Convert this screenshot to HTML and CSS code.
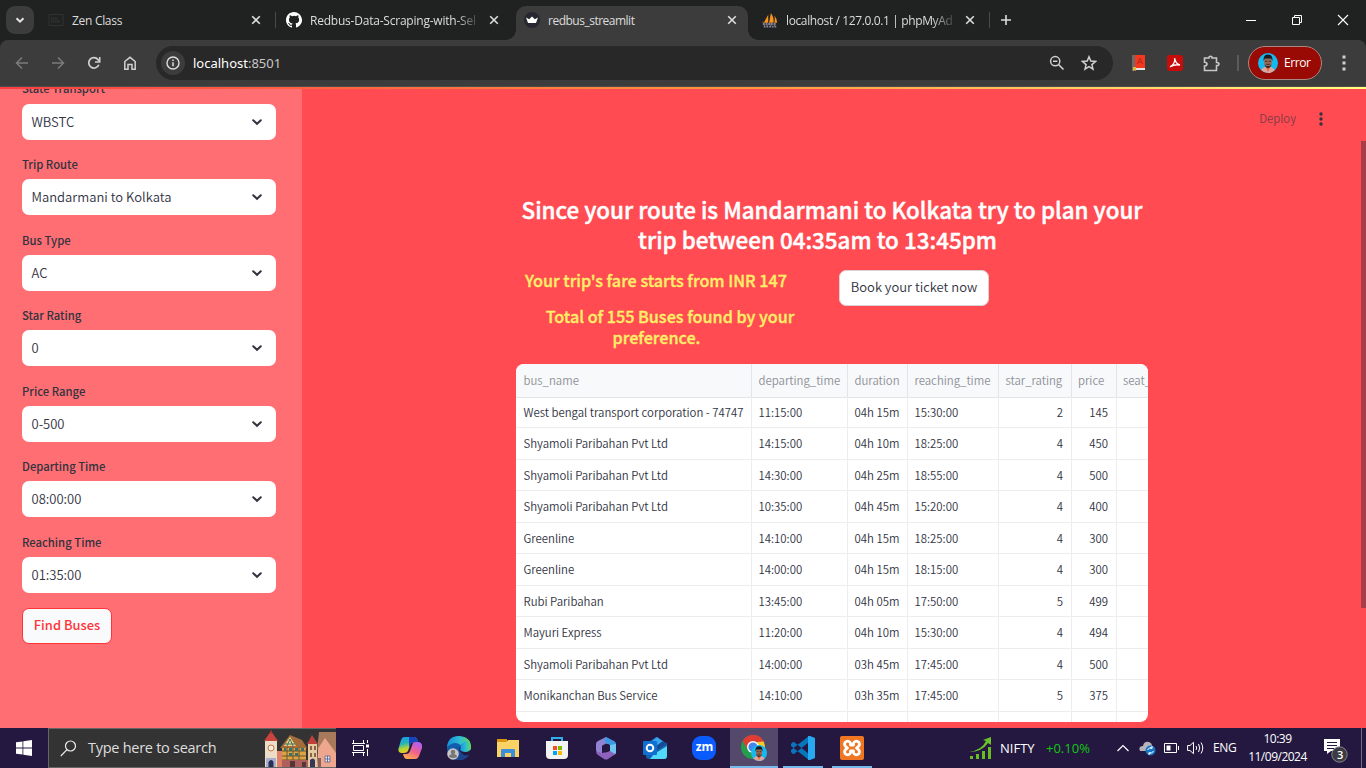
FILE: index.html
```html
<!DOCTYPE html>
<html lang="en">
<head>
<meta charset="utf-8">
<title>redbus_streamlit</title>
<link rel="stylesheet" href="styles.css">
</head>
<body>
<svg class="defs" width="0" height="0">
  <defs>
    <symbol id="close" viewBox="0 0 10 10"><path d="M1.2 1.2l7.6 7.6M8.800 1.200L1.200 8.800" fill="none" stroke="#dcdcdc" stroke-width="1.600"/></symbol>
    <symbol id="chev" viewBox="0 0 12 12"><path d="M2.200 4.200L6 7.800l3.800-3.600" fill="none" stroke="#31333f" stroke-width="2" stroke-linecap="round"/></symbol>
    <symbol id="sail" viewBox="0 0 18 18"><path d="M2 12L7 3v9zM8 12L10 1q4 6 3 11zM14 12q1-4 0-8 3 4 3 8z" fill="#f79420"/><path d="M1 11l2 5M5 12l1 4M10 12v4M15 12l-1 4" stroke="#c77b28" stroke-width="1"/><path d="M1 13.500h15M2 16.500h14" stroke="#7c83ad" stroke-width="2" stroke-dasharray="2 1"/></symbol>
    <symbol id="face" viewBox="0 0 20 20"><circle cx="10" cy="10" r="10" fill="#16b9ee"/><path d="M3 17q2-3.500 7-3.500t7 3.500q-3 3-7 3t-7-3z" fill="#dba6a0"/><path d="M8 14l2 5 2-5z" fill="#e8622d"/><ellipse cx="10" cy="8.800" rx="3.900" ry="5.500" fill="#9a6a56"/><path d="M5.600 8Q5 1.500 10 1.500T14.400 8l-1.200-2.500H6.800z" fill="#191a24"/><path d="M7 8.300h2.300M10.700 8.300H13M8.300 11.300h3.400" stroke="#33221f" stroke-width=".9"/><path d="M6.500 11q.5 4 3.500 4t3.500-4l-1.500 2H8z" fill="#3b2726"/></symbol>
  </defs>
</svg>

<header class="tabstrip">
  <div class="tab-search"><button class="tab-search-btn"><svg width="12" height="12" viewBox="0 0 12 12"><path d="M2.500 4.200L6 7.700l3.500-3.500" fill="none" stroke="#e3e3e3" stroke-width="2"/></svg></button></div>
  <div class="tab"><svg width="16" height="16" viewBox="0 0 16 16"><rect x="1" y="2.500" width="14" height="11" fill="none" stroke="#303131"/><path d="M3 6.500h7M3 9.500h9" stroke="#333" stroke-width="2" stroke-dasharray="1.500 .6"/></svg><span class="tab-title t1">Zen Class</span><svg class="x" width="10" height="10"><use href="#close"/></svg><i></i></div>
  <div class="tab"><svg width="16" height="16" viewBox="0 0 16 16"><path fill="#fff" d="M8 0C3.580 0 0 3.580 0 8c0 3.540 2.290 6.530 5.470 7.590.4.070.55-.17.55-.38v-1.490c-2.010.37-2.530-.49-2.690-.94-.09-.23-.48-.94-.82-1.130-.28-.15-.68-.52-.01-.53.63-.01 1.080.58 1.230.82.72 1.210 1.870.87 2.330.66.070-.52.28-.87.51-1.070-1.780-.2-3.640-.89-3.640-3.950 0-.87.31-1.590.82-2.150-.08-.2-.36-1.020.08-2.120 0 0 .67-.21 2.200.82a7.400 7.400 0 0 1 4 0c1.530-1.040 2.200-.82 2.200-.82.44 1.100.16 1.920.08 2.120.51.56.82 1.270.82 2.150 0 3.070-1.870 3.750-3.650 3.950.29.25.54.73.54 1.480v2.190c0 .21.150.46.550.38A8 8 0 0 0 8 0z"/></svg><span class="tab-title t2">Redbus-Data-Scraping-with-Sel</span><svg class="x" width="10" height="10"><use href="#close"/></svg></div>
  <div class="tab active"><svg width="16" height="16" viewBox="0 0 16 16"><circle cx="8" cy="8" r="8" fill="#262730"/><path d="M2 5.500l3.200 1.800L8 4.500l2.800 2.800L14 5.500l-2 5.500H4z" fill="#fff"/></svg><span class="tab-title t3">redbus_streamlit</span><svg class="x" width="10" height="10"><use href="#close"/></svg></div>
  <div class="tab"><svg width="18" height="18"><use href="#sail"/></svg><span class="tab-title t4">localhost / 127.0.0.1 | phpMyAd</span><svg class="x" width="10" height="10"><use href="#close"/></svg><i></i></div>
  <svg class="plus" width="12" height="12" viewBox="0 0 12 12"><path d="M6 1v10M1 6h10" stroke="#dcdcdc" stroke-width="1.600"/></svg>
  <div class="win">
    <svg width="12" height="12" viewBox="0 0 12 12"><path d="M1 6.500h10" stroke="#fff"/></svg>
    <svg width="12" height="12" viewBox="0 0 12 12"><path d="M1.500 3.500h7v7h-7zM3.500 3V1.500h7v7H9" fill="none" stroke="#fff"/></svg>
    <svg width="12" height="12" viewBox="0 0 12 12"><path d="M1 1l10 10M11 1L1 11" stroke="#fff" stroke-width="1.100"/></svg>
  </div>
</header>

<nav class="toolbar">
  <div class="nav-btns">
    <svg width="14" height="14" viewBox="0 0 14 14"><path d="M13 7H2M7 1.500L1.500 7 7 12.500" fill="none" stroke="#7b7b7b" stroke-width="1.500"/></svg>
    <svg width="14" height="14" viewBox="0 0 14 14"><path d="M1 7h11M7 1.500L12.500 7 7 12.500" fill="none" stroke="#7b7b7b" stroke-width="1.500"/></svg>
    <svg width="14" height="14" viewBox="0 0 14 14"><path d="M11.800 8.700A5.200 5.200 0 1 1 11 3.600L12.300 5" fill="none" stroke="#d0d0d0" stroke-width="1.700"/><path d="M12.700 1v5H8" fill="none" stroke="#d0d0d0" stroke-width="1.600"/></svg>
    <svg width="14" height="14" viewBox="0 0 14 14"><path d="M1.800 5.500L7 1.300l5.200 4.200v7.700H9V8.500H5v4.700H1.800z" fill="none" stroke="#d0d0d0" stroke-width="1.500"/></svg>
  </div>
  <div class="omnibox">
    <span class="info"><svg width="14" height="14" viewBox="0 0 14 14"><circle cx="7" cy="7" r="6" fill="none" stroke="#dedede" stroke-width="1.400"/><path d="M7 6.200v4M7 3.500v1.500" stroke="#dedede" stroke-width="1.500"/></svg></span>
    <span class="url">localhost<b>:8501</b></span>
    <svg class="mag" width="16" height="16" viewBox="0 0 16 16"><circle cx="6.200" cy="6.200" r="4.600" fill="none" stroke="#d0d0d0" stroke-width="1.500"/><path d="M9.500 9.500l5 5M4 6.200h4.400" stroke="#d0d0d0" stroke-width="1.600"/></svg>
    <svg width="16" height="16" viewBox="0 0 16 16"><path d="M8 1.800l1.800 4.300 4.700.4-3.600 3.100 1.100 4.600L8 11.700l-4 2.500 1.100-4.600L1.500 6.500l4.700-.4z" fill="none" stroke="#d0d0d0" stroke-width="1.500"/></svg>
  </div>
  <div class="ext">
    <svg width="14" height="16" viewBox="0 0 14 16"><path d="M0 0h3v16H0z" fill="#6d6a67"/><path d="M3 0h10v13H3z" fill="#f4371f"/><path d="M5.500 9L8 3l2.500 6M6 7h4" stroke="#b32b1c" fill="none"/><path d="M2 13h11v2H2z" fill="#e4e4e4"/><path d="M1 12h3v4l-1.500-1L1 16z" fill="#e4b637"/></svg>
    <svg width="16" height="16" viewBox="0 0 16 16"><rect width="16" height="16" rx="2.500" fill="#c60d0a"/><path d="M3 11.800Q8.500 9 7.600 3.200 8.500 9 13 10q-5-1-10 1.800z" fill="none" stroke="#fff" stroke-width="1.300"/></svg>
    <svg width="17" height="17" viewBox="0 0 17 17"><path d="M1.500 3H6V2q1.500-1.600 3 0v1h4.500v4.500q2.500 0 2.500 1.600T13.500 10.500V15.500h-12V11q2.500-.2 2.500-1.900T1.500 7.200z" fill="none" stroke="#c7c7c7" stroke-width="1.600"/></svg>
    <i></i>
    <div class="profile"><svg width="20" height="20"><use href="#face"/></svg><span>Error</span></div>
    <svg width="4" height="16" viewBox="0 0 4 16"><path d="M0.500 2h3M.5 8h3M.5 14h3" stroke="#d0d0d0" stroke-width="3"/></svg>
  </div>
</nav>

<div class="page">
  <aside class="sidebar">
    <label>State Transport</label><div class="select"><span>WBSTC</span><svg width="12" height="12"><use href="#chev"/></svg></div>
    <label>Trip Route</label><div class="select"><span>Mandarmani to Kolkata</span><svg width="12" height="12"><use href="#chev"/></svg></div>
    <label>Bus Type</label><div class="select"><span>AC</span><svg width="12" height="12"><use href="#chev"/></svg></div>
    <label>Star Rating</label><div class="select"><span>0</span><svg width="12" height="12"><use href="#chev"/></svg></div>
    <label>Price Range</label><div class="select"><span>0-500</span><svg width="12" height="12"><use href="#chev"/></svg></div>
    <label>Departing Time</label><div class="select"><span>08:00:00</span><svg width="12" height="12"><use href="#chev"/></svg></div>
    <label>Reaching Time</label><div class="select"><span>01:35:00</span><svg width="12" height="12"><use href="#chev"/></svg></div>
    <button class="find">Find Buses</button>
  </aside>
  <main class="main">
    <div class="app-bar"><span>Deploy</span><svg width="4" height="14" viewBox="0 0 4 14"><circle cx="2" cy="2" r="1.700"/><circle cx="2" cy="7" r="1.700"/><circle cx="2" cy="12" r="1.700"/></svg></div>
    <div class="content">
      <h2>Since your route is Mandarmani to Kolkata try to plan your<br><span class="anchor">trip between 04:35am to 13:45pm</span></h2>
      <div class="cols">
        <div class="facts"><h4 class="fare">Your trip's fare starts from INR 147</h4><h4 class="total">Total of 155 Buses found by your<br><span class="anchor">preference.</span></h4></div>
        <button class="book">Book your ticket now</button>
      </div>
      <div class="table">
        <div class="row head"><span>bus_name</span><span>departing_time</span><span>duration</span><span>reaching_time</span><span>star_rating</span><span>price</span><span>seat_</span></div>
        <div class="row"><span>West bengal transport corporation - 74747</span><span>11:15:00</span><span>04h 15m</span><span>15:30:00</span><span>2</span><span>145</span><span></span></div>
        <div class="row"><span>Shyamoli Paribahan Pvt Ltd</span><span>14:15:00</span><span>04h 10m</span><span>18:25:00</span><span>4</span><span>450</span><span></span></div>
        <div class="row"><span>Shyamoli Paribahan Pvt Ltd</span><span>14:30:00</span><span>04h 25m</span><span>18:55:00</span><span>4</span><span>500</span><span></span></div>
        <div class="row"><span>Shyamoli Paribahan Pvt Ltd</span><span>10:35:00</span><span>04h 45m</span><span>15:20:00</span><span>4</span><span>400</span><span></span></div>
        <div class="row"><span>Greenline</span><span>14:10:00</span><span>04h 15m</span><span>18:25:00</span><span>4</span><span>300</span><span></span></div>
        <div class="row"><span>Greenline</span><span>14:00:00</span><span>04h 15m</span><span>18:15:00</span><span>4</span><span>300</span><span></span></div>
        <div class="row"><span>Rubi Paribahan</span><span>13:45:00</span><span>04h 05m</span><span>17:50:00</span><span>5</span><span>499</span><span></span></div>
        <div class="row"><span>Mayuri Express</span><span>11:20:00</span><span>04h 10m</span><span>15:30:00</span><span>4</span><span>494</span><span></span></div>
        <div class="row"><span>Shyamoli Paribahan Pvt Ltd</span><span>14:00:00</span><span>03h 45m</span><span>17:45:00</span><span>4</span><span>500</span><span></span></div>
        <div class="row"><span>Monikanchan Bus Service</span><span>14:10:00</span><span>03h 35m</span><span>17:45:00</span><span>5</span><span>375</span><span></span></div>
        <div class="row"><span></span><span></span><span></span><span></span><span></span><span></span><span></span></div>
      </div>
    </div>
  </main>
  <div class="decoration"></div>
  <div class="scrollbar"></div>
</div>

<footer class="taskbar">
  <div class="start"><svg width="16" height="16" viewBox="0 0 16 16"><path d="M0 2.300L6.500 1.400v6.200H0zM7.300 1.300L16 0v7.600H7.300zM0 8.400h6.500v6.200L0 13.700zM7.300 8.400H16V16l-8.700-1.300z" fill="#fff"/></svg></div>
  <div class="search">
    <svg width="17" height="17" viewBox="0 0 17 17"><circle cx="10.500" cy="6" r="5" fill="none" stroke="#eee" stroke-width="1.200"/><path d="M7 9.700L.8 16" stroke="#eee" stroke-width="1.200"/></svg>
    <span>Type here to search</span>
    <svg class="town" width="72" height="38" viewBox="0 0 72 38">
      <path d="M1 12h12v26H1z" fill="#eddcc7"/><path d="M0 12L7 2l7 10z" fill="#c9443c"/><path d="M7 1v4" stroke="#a33"/><circle cx="7" cy="19" r="3" fill="#f5eddd" stroke="#c47743"/><path d="M2 29h10v9H2z" fill="#a9add0"/><path d="M4.500 38v-5q3-4 5 0v5z" fill="#253054"/>
      <path d="M13 22h6v16h-6z" fill="#df8167"/><path d="M18 18h24v20H18z" fill="#dba344"/><path d="M16 19L26 6l12 5 5 8z" fill="#a26d38"/><path d="M20 17l6-9 6 9z" fill="#efd68a"/><path d="M23 17l3-7 3 7M21 15h10" stroke="#3c716b" fill="none"/><path d="M18 22h24M18 27h24M18 31h24M23 18v13M29 18v13M35 18v13" stroke="#6b552d"/><path d="M20 19h2v3h-2zM25 19h3v3h-3zM31 19h3v3h-3zM37 19h3v3h-3zM25 24h3v3h-3zM31 24h3v3h-3z" fill="#3c716b"/><path d="M18 31h26v7H18z" fill="#ae605c"/><path d="M26 32h5v6h-5zM38 33h4v5h-4z" fill="#563538"/>
      <path d="M44 14h9v24h-9z" fill="#e7c9a0"/><path d="M43 15l5-9 6 9z" fill="#bd403b"/><path d="M46 17h2v4h-2zM50 17h2v4h-2zM46 24h2v4h-2zM50 24h2v4h-2z" fill="#886348"/><path d="M46 38v-7q3-3 5 0v7z" fill="#34395c"/>
      <path d="M54 19L61 5h11v33H53z" fill="#eda78e"/><path d="M55 3h17v21L61 9l-8 12z" fill="#a77a5b"/><path d="M61 27h5v6h-5z" fill="#f1f0e6" stroke="#8b6a88"/><path d="M63.500 27v6M61 30h5" stroke="#5673a8"/><path d="M54 29h3v9h-3z" fill="#8c615c"/>
    </svg>
  </div>
  <div class="apps">
    <div class="view"><svg width="18" height="16" viewBox="0 0 18 16"><path d="M1.500 0v3.500h10V0M1.500 5.500h10v5h-10zM1.500 16v-3.500h10V16M15.500 0v3M15.500 9v7" fill="none" stroke="#fff"/><path d="M0 3.500h13M0 12.500h13" stroke="#fff"/><path d="M14 4.500h3v3h-3z" fill="#fff"/></svg></div>
    <div><svg width="24" height="24" viewBox="0 0 24 24"><defs><linearGradient id="c1" x1="0" y1="0" x2=".3" y2="1"><stop offset="0" stop-color="#1797ee"/><stop offset=".45" stop-color="#26b5b5"/><stop offset=".75" stop-color="#b8d530"/><stop offset="1" stop-color="#f0c624"/></linearGradient><linearGradient id="c2" x1=".7" y1="0" x2=".2" y2="1"><stop offset="0" stop-color="#b35df0"/><stop offset=".5" stop-color="#f0628d"/><stop offset="1" stop-color="#ffae47"/></linearGradient></defs><path d="M6 1h10q3 0 4 5h-4q-3 0-4 3l-2 6q-1 2-4 2H3q-4-1-2-6l2-7q1-3 3-3z" fill="url(#c1)"/><path d="M18 23H9q-3 0-4-5h3q3 0 4-3l3-8q0-1 3-1h3q4 1 3 6l-3 8q-1 3-3 3z" fill="url(#c2)"/><path d="M11 1h5q3 0 4 5h-5q-2 0-3 3l-1 4z" fill="#1644bd"/></svg></div>
    <div><svg width="26" height="26" viewBox="0 0 26 26"><defs><linearGradient id="e1" x1="0" x2="1"><stop offset="0" stop-color="#168ddb"/><stop offset=".55" stop-color="#31bed2"/><stop offset="1" stop-color="#67d94e"/></linearGradient></defs><circle cx="13" cy="13" r="12" fill="#115eac"/><path d="M1 12Q2 1 13 1q12 1 12 11 0 5-7 5-4 0-4-2 3-4-1-6-5-3-12 3z" fill="url(#e1)"/><path d="M11 11q-3 10 13 8Q20 25 13 25q-9-4-2-14z" fill="#1c438e"/><path d="M14 11q-2 7 11 4l1 4q-4 2-8 1-7-3-4-9z" fill="#241840"/><path d="M14 10q3 2 0 5 2 2 5 2 5 0 6-4 0-5-5-7z" fill="url(#e1)"/><circle cx="7" cy="19" r="5.800" fill="#c8c8c8"/><circle cx="7" cy="17" r="2.300" fill="#777"/><path d="M3 22q0-3 4-3t4 3q-4 2-8 0z" fill="#777"/></svg></div>
    <div><svg width="22" height="20" viewBox="0 0 22 20"><path d="M0 1h10v4H0z" fill="#dd950f"/><path d="M0 4h9l2-2h11v17H0z" fill="#fbd365"/><path d="M4 19v-7q0-1 1-1h12q1 0 1 1v7h-4v-4H8v4z" fill="#3b8ed7"/></svg></div>
    <div><svg width="24" height="24" viewBox="0 0 24 24"><path d="M7 7V2h10v5" stroke="#2eaeea" stroke-width="2" fill="none"/><path d="M1 5h22v14q0 4-4 4H5q-4 0-4-4z" fill="#f3f3f3"/><path d="M8 10h4v4H8z" fill="#f25022"/><path d="M13 10h4v4h-4z" fill="#7fba00"/><path d="M8 15h4v4H8z" fill="#00a4ef"/><path d="M13 15h4v4h-4z" fill="#ffb900"/></svg></div>
    <div><svg width="22" height="24" viewBox="0 0 22 24"><path d="M11 1l3 2v4l-7 4v7l-5-2q-1-1-1-2V8q0-2 2-3z" fill="#9083d5"/><path d="M11 1l8 4q2 1 2 3v8q0 2-2 3l-4-3V9l-4-2q-3-3 0-6z" fill="#3c9ae0"/><path d="M1 14q0 2 2 2l4 1 5-1 9-3v4q0 1-2 2l-6 4q-2 1-4 0l-6-4q-2-1-2-5z" fill="#8c62bc"/><path d="M15 9l6-1v8q0 1-1 2l-5-3z" fill="#70c6f2"/><path d="M11 7.500l4 2.200v4.600l-4 2.200-4-2.200V9.700z" fill="#241840"/></svg></div>
    <div><svg width="26" height="24" viewBox="0 0 26 24"><path d="M4 8L14 1l11 7v12q0 3-3 3H7q-3 0-3-3z" fill="#1462b5"/><path d="M9 6l6-5 10 7-10 7z" fill="#38a6ed"/><path d="M14 10l7-5 4 3-10 7z" fill="#164a96"/><path d="M25 10v10q0 3-3 3H8l4-5z" fill="#50d9fb"/><rect x="1" y="5" width="14" height="14" rx="1" fill="#1070d2"/><circle cx="8" cy="12" r="3.300" fill="none" stroke="#fff" stroke-width="1.900"/></svg></div>
    <div><span class="zm">zm</span></div>
    <div class="on cur"><svg width="26" height="26" viewBox="0 0 26 26"><circle cx="12" cy="12" r="12" fill="#249e4b"/><path d="M1.600 6A12 12 0 0 1 23 7H12L7 15z" fill="#df3d34"/><path d="M22.600 6.500Q28 20 12 24l6-10-2-7z" fill="#fbc927"/><circle cx="12" cy="12" r="6" fill="#fff"/><circle cx="12" cy="12" r="4.600" fill="#4286ee"/><svg x="10" y="10" width="16" height="16"><use href="#face"/></svg></svg></div>
    <div class="on"><svg width="24" height="24" viewBox="0 0 24 24"><path d="M0 8l2-2h1l15 12v6L0 10zM0 16l2 2h1L18 6V0L0 14z" fill="#0876bd"/><path d="M17 0h2l5 2v20l-5 2h-2z" fill="#27a9f2"/></svg></div>
    <div class="on"><svg width="24" height="24" viewBox="0 0 24 24"><rect width="24" height="24" rx="2" fill="#ef7623"/><path d="M7.500 12Q3.500 9.500 5 6.500 8 3.500 10.500 7v2h3V7Q16 3.500 19 6.500 20.500 9.500 16.500 12 20.500 14.500 19 17.500 16 20.500 13.500 17v-2h-3v2Q8 20.500 5 17.500 3.500 14.500 7.500 12z" fill="none" stroke="#fff" stroke-width="2.800" stroke-linejoin="round"/></svg></div>
  </div>
  <div class="tray">
    <svg class="nifty" width="23" height="24" viewBox="0 0 23 24"><path d="M1 20h3v3H1zM7 18h3v5H7zM13 15h3v8h-3zM19 11h3v12h-3z" fill="#68bd25"/><path d="M0 16Q13 14 17 5l-3-1 8-3v8l-3-2Q13 16 0 16z" fill="#6cc22b"/></svg>
    <span class="n1">NIFTY</span><span class="n2">+0.10%</span>
    <svg class="up" width="12" height="8" viewBox="0 0 12 8"><path d="M.5 7L6 1.500 11.500 7" fill="none" stroke="#fff" stroke-width="1.200"/></svg>
    <svg class="cloud" width="17" height="15" viewBox="0 0 17 15"><path d="M1 10Q-1 5 4 5q1-5 6-4 3 1 3 4 4 1 2 5z" fill="#b6b4b8"/><circle cx="11.500" cy="9.500" r="5" fill="#1675c4"/><path d="M8.500 9q1-3 5-2M14.500 10q-1 3-5 2M13 5v2h-2M10 14v-2h2" fill="none" stroke="#fff" stroke-width="1"/></svg>
    <svg class="bat" width="15" height="10" viewBox="0 0 15 10"><path d="M.5.5h12v9H.5zM14.500 3v4" fill="none" stroke="#fff"/><path d="M2.500 2.500h4v5h-4z" fill="#fff"/></svg>
    <svg class="spk" width="17" height="14" viewBox="0 0 17 14"><path d="M.6 4.500H3L6.500 1.300v11.400L3 9.500H.6zM9 5q1.500 2 0 4M11.500 3q2.500 4 0 8M14 1.500q3.500 5.500 0 11" fill="none" stroke="#fff"/></svg>
    <span class="eng">ENG</span>
    <div class="clock"><span>10:39</span><span>11/09/2024</span></div>
    <div class="notif"><svg width="24" height="24" viewBox="0 0 24 24"><path d="M0 0h16v12H7l-4 3v-3H0z" fill="#fff"/><path d="M3 3.500h10M3 6.500h10M3 9.500h7" stroke="#241840"/><circle cx="15.500" cy="15.500" r="7.700" fill="#3b3b41" stroke="#88858e"/></svg><b>3</b></div>
    <i></i>
  </div>
</footer>
</body>
</html>
```
FILE: styles.css
```css
* { box-sizing: border-box; }
body { margin: 0; width: 1366px; height: 768px; overflow: hidden; display: flex; flex-direction: column; font-family: "Noto Sans", "Open Sans", sans-serif; background: #202221; }
svg { display: block; flex: none; }
button { padding: 0; margin: 0; font: inherit; }
h2, h4 { margin: 0; }
.defs { position: absolute; }

.tabstrip { height: 40px; flex: none; display: flex; background: #202221; color: #dcdcdc; font: 12px/16px "Open Sans", sans-serif; align-items: center; }
.tab-search { width: 40px; padding-left: 6px; }
.tab-search-btn { width: 28px; height: 28px; border: 0; border-radius: 9px; background: #3c3c3c; display: grid; place-items: center; }
.tab { width: 238px; height: 34px; margin-top: 6px; padding: 0 11px 6px 8px; display: flex; align-items: center; position: relative; }
.tab > svg:first-child { width: 16px; height: 16px; }
.tab-title { margin: 2px 0 0 8px; width: 167px; overflow: hidden; white-space: nowrap; letter-spacing: -.3px; }
.tab .x { margin-left: 12px; }
.tab i { position: absolute; left: 235px; top: 6px; width: 1px; height: 16px; background: #494b4a; }
.t2, .t4 { -webkit-mask-image: linear-gradient(90deg, #000 145px, transparent 172px); mask-image: linear-gradient(90deg, #000 145px, transparent 172px); }
.t2 { letter-spacing: -.22px; }
.t3 { letter-spacing: -.5px; }
.t4 { letter-spacing: -.38px; }
.tab.active { width: 232px; margin-right: 6px; background: #3c3c3c; border-radius: 10px 10px 0 0; padding-right: 5px; }
.tab.active::before, .tab.active::after { content: ""; position: absolute; bottom: 0; width: 10px; height: 10px; }
.tab.active::before { left: -10px; background: radial-gradient(circle at 0 0, transparent 9.500px, #3c3c3c 10px); }
.tab.active::after { right: -10px; background: radial-gradient(circle at 100% 0, transparent 9.500px, #3c3c3c 10px); }
.plus { margin-left: 8px; }
.win { margin-left: auto; display: flex; gap: 34px; padding-right: 17px; }

.toolbar { height: 47px; flex: none; background: linear-gradient(#3c3c3c 46px, #4d4d4d 46px); border-radius: 8px 8px 0 0; display: flex; align-items: center; padding-bottom: 1px; }
.nav-btns { width: 156px; padding-left: 15px; display: flex; gap: 22px; }
.omnibox { width: 957px; height: 34px; border-radius: 17px; background: #282828; display: flex; align-items: center; padding: 0 16px 0 5px; }
.info { width: 24px; height: 24px; border-radius: 50%; background: #3c3c3c; display: grid; place-items: center; }
.url { margin-left: 8px; color: #fff; font: 13px/18px "Noto Sans", sans-serif; }
.url b { font-weight: 400; color: #c7c7c7; }
.mag { margin-left: auto; margin-right: 16px; }
.ext { flex: 1; display: flex; align-items: center; padding-left: 19px; }
.ext > svg:nth-child(2) { margin-left: 21px; }
.ext > svg:nth-child(3) { margin-left: 20px; }
.ext i { width: 2px; height: 16px; background: #5b5b5b; margin: 0 9px 0 17px; }
.profile { width: 74px; height: 34px; border: 1px solid #a78782; border-radius: 17px; background: #990a05; display: flex; align-items: center; padding-left: 9px; gap: 6px; color: #fff; font: 12px/16px "Open Sans", sans-serif; letter-spacing: -.4px; }
.ext > svg:last-child { margin-left: 20px; }

.page { height: 641px; flex: none; display: flex; position: relative; overflow: hidden; background: #ff4b51; font-family: "Noto Sans CJK SC", sans-serif; color: #31333f; }
.decoration { position: absolute; inset: 0 0 auto; height: 2px; background: linear-gradient(90deg, #ff3d40, #ff983f 55%, #ffff80); }
.scrollbar { position: absolute; right: 0; top: 54px; width: 5px; height: 467px; background: #a73d4b; }
.sidebar { width: 302px; flex: none; background: #ff6e73; padding: 0 26px 0 22px; }
.sidebar label { display: block; height: 20.400px; margin: 14.400px 0 4.800px; font-size: 11.300px; line-height: 21px; font-weight: 500; }
.sidebar label:first-child { margin-top: -8.600px; }
.select { height: 36px; background: #fff; border-radius: 7px; display: flex; align-items: center; justify-content: space-between; padding: 0 13px 0 9.500px; font-size: 13px; line-height: 36px; font-weight: 350; }
.find { margin-top: 15px; width: 90px; height: 36px; border: 1px solid #ff3438; border-radius: 7px; background: #f9fafc; color: #ff3438; font-size: 12.900px; font-weight: 500; padding-bottom: 4px; }
.main { flex: 1; }
.app-bar { height: 63px; display: flex; justify-content: flex-end; align-items: center; gap: 23px; padding-right: 43px; font-size: 11.400px; color: #7f3b49; font-weight: 350; }
.app-bar span { margin-bottom: 2px; }
.app-bar svg { fill: #31333f; }
.content { width: 632px; margin-left: 214px; padding-top: 44px; }
h2 { color: #fff; font-size: 22.400px; line-height: 30.200px; text-align: center; font-weight: 500; white-space: nowrap; width: 632px; -webkit-text-stroke: .45px #fff; }
.anchor { padding-right: 29px; }
.cols { display: flex; height: 100px; margin-top: 16px; }
.facts { width: 323px; color: #ffee68; }
h4 { font-size: 16.180px; line-height: 21px; font-weight: 500; white-space: nowrap; text-align: center; -webkit-text-stroke: .35px #ffee68; }
.fare { width: 280px; }
.total { width: 308px; margin-top: 14.800px; }
.total .anchor { padding-right: 27px; }
.book { width: 150px; height: 36px; background: #fff; border: 1px solid #d9d2d5; border-radius: 7px; color: #31333f; font-size: 13px; font-weight: 350; padding-bottom: 4px; }
.table { width: 632px; height: 358px; overflow: hidden; border-radius: 8px; background: #fff; font-size: 11.400px; margin-top: -6px; font-weight: 350; }
.row { display: grid; grid-template-columns: 236px 96px 60px 91px 72.500px 45px 120px; height: 31.500px; width: 720.500px; }
.row span { border-right: 1px solid #ededf0; border-bottom: 1px solid #ededf0; padding: 0 7.500px 0 6.500px; line-height: 30px; white-space: nowrap; }
.row span:first-child { padding-left: 7.500px; padding-right: 0; }
.row:not(.head) span:nth-child(5), .row:not(.head) span:nth-child(6) { text-align: right; }
.row.head { height: 32.300px; background: #f8f9fb; color: #8e9097; }
.row.head span { line-height: 33px; border-color: #e4e5e9; padding-right: 0; }

.taskbar { height: 40px; flex: none; background: #241840; display: flex; color: #fff; }
.start { width: 48px; display: grid; place-items: center; }
.search { width: 288px; border: 1px solid #656565; border-right: 0; background: #333; display: flex; align-items: center; padding-left: 11px; color: #dedede; font: 14.500px/20px "Open Sans", sans-serif; letter-spacing: -.27px; }
.search span { margin-left: 11px; white-space: nowrap; }
.search .town { margin-left: auto; }
.apps { display: flex; gap: 1.130px; padding-left: .6px; }
.apps > div { width: 48px; height: 40px; display: grid; place-items: center; }
.apps > .on { background: linear-gradient(#76b9ed, #76b9ed) center bottom / 40px 2px no-repeat; }
.apps > .cur { background: linear-gradient(#76b9ed, #76b9ed) center bottom / 48px 2px no-repeat #54496a; }
.zm { width: 24px; height: 24px; border-radius: 9px; background: #0b5cff; font: 700 12px/21px "Open Sans", sans-serif; text-align: center; }
.tray { margin-left: auto; width: 397px; flex: none; display: flex; align-items: center; font: 12px/18px "Open Sans", sans-serif; }
.n1 { margin-left: 8px; width: 46px; font-size: 13px; }
.n2 { width: 69px; color: #12c712; font-size: 13px; }
.up { margin-left: 2px; }
.cloud { margin-left: 10px; }
.bat { margin-left: 8px; }
.spk { margin-left: 8px; }
.eng { margin-left: 9px; width: 27px; letter-spacing: -.3px; }
.clock { width: 75px; display: flex; flex-direction: column; text-align: center; letter-spacing: -.5px; }
.notif { position: relative; margin-left: 9px; padding-top: 6px; }
.notif b { position: absolute; left: 13px; top: 13px; font-size: 11px; line-height: 18px; font-weight: 600; }
.tray i { width: 1px; height: 40px; margin-left: auto; margin-right: 4px; background: #746c82; }
```
